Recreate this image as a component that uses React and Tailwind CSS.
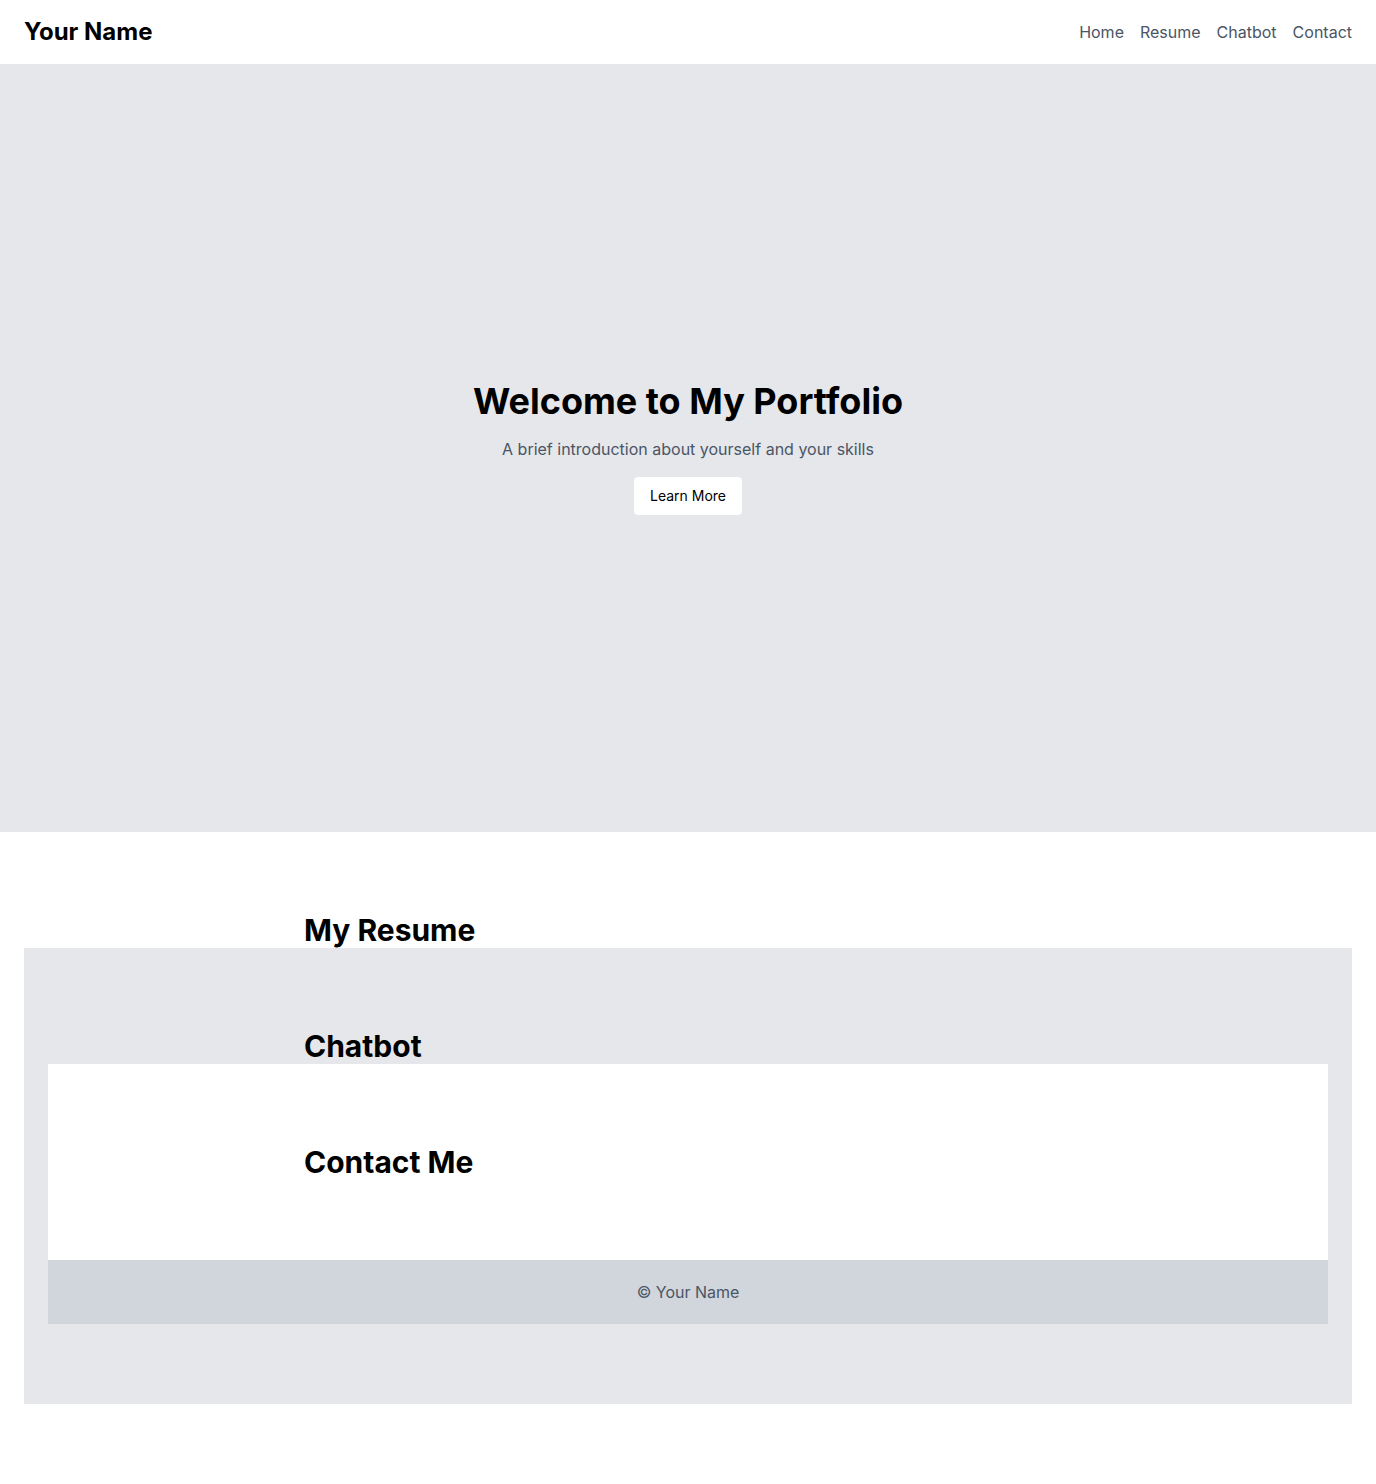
export default function App() {
  return (
    <div className="min-h-screen bg-white text-black" style={{ fontFamily: "Inter, 'Noto Sans', sans-serif" }}>
      <header className="h-16 px-6 flex items-center justify-between bg-white">
        <div className="text-2xl font-bold">Your Name</div>
        <nav className="flex gap-4 text-gray-600">
          <a href="#">Home</a>
          <a href="#">Resume</a>
          <a href="#">Chatbot</a>
          <a href="#">Contact</a>
        </nav>
      </header>
      <section className="h-[768px] bg-gray-200 flex flex-col items-center justify-center text-center">
        <h1 className="text-4xl font-bold mb-4">Welcome to My Portfolio</h1>
        <p className="text-base text-gray-600 mb-4">A brief introduction about yourself and your skills</p>
        <button className="bg-white rounded px-4 py-[9px] text-sm">Learn More</button>
      </section>
      <section className="py-20 px-6">
        <div className="max-w-3xl mx-auto">
          <h2 className="text-3xl font-bold">My Resume</h2>
        </div>
        <section className="bg-gray-200 py-20 px-6">
          <div className="max-w-3xl mx-auto">
            <h2 className="text-3xl font-bold">Chatbot</h2>
          </div>
          <section className="bg-white py-20">
            <div className="max-w-3xl mx-auto">
              <h2 className="text-3xl font-bold">Contact Me</h2>
            </div>
          </section>
          <footer className="bg-gray-300 py-5 text-center text-gray-600">© Your Name</footer>
        </section>
      </section>
    </div>
  );
}
